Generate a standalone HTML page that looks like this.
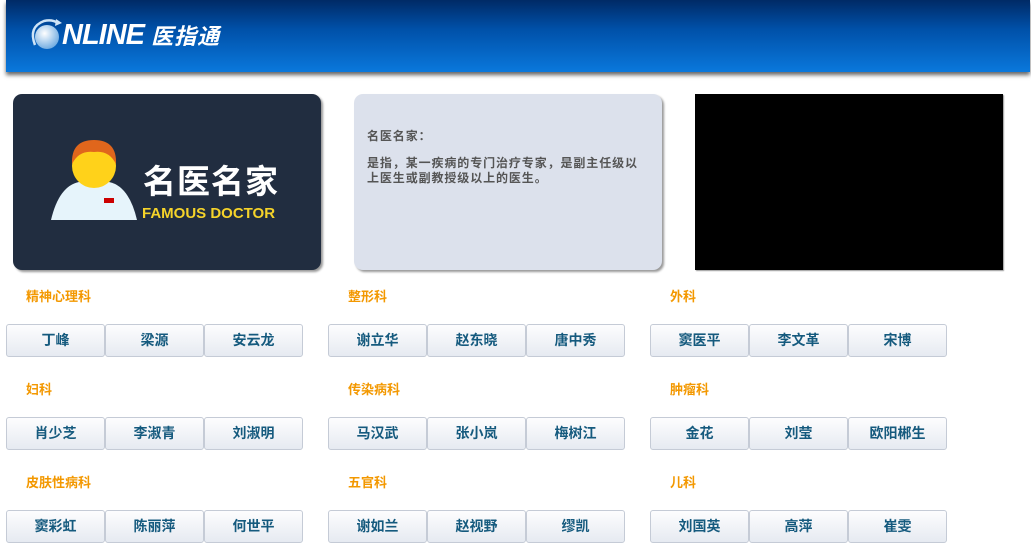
<!DOCTYPE html><html><head><meta charset="utf-8"><style>
body{margin:0;width:1031px;height:559px;background:#fff;position:relative;overflow:hidden;font-family:"Liberation Sans","Noto Sans CJK SC",sans-serif}
.hdr{position:absolute;left:6px;top:0;width:1024px;height:72px;background:linear-gradient(#002a66 0%,#0050a8 40%,#0a78dc 100%);box-shadow:0 3px 4px #666}
.logo{position:absolute;left:56px;top:19px;color:#fff;font-weight:bold;font-style:italic;font-size:29px;letter-spacing:-1px}
.logo span{font-size:22px;letter-spacing:1px}
.card{position:absolute;top:94px;width:308px;height:176px;border-radius:9px;box-shadow:2px 2px 2px #999}
.t{position:absolute;color:#f39800;font-weight:bold;font-size:13px}
.b{position:absolute;width:97px;height:31px;border:1px solid #c5cbd6;border-radius:3px;background:linear-gradient(#fdfdfe,#e6eaf1);color:#155a7e;font-weight:bold;font-size:14px;text-align:center;line-height:31px}
</style></head><body>
<div class="hdr">
<svg style="position:absolute;left:24px;top:17px" width="36" height="38"><defs><radialGradient id="g" cx="0.4" cy="0.35" r="0.7"><stop offset="0" stop-color="#fff"/><stop offset="1" stop-color="#6aa8e0"/></radialGradient></defs><circle cx="17" cy="20" r="12" fill="url(#g)"/><path d="M5 28 Q-2 10 14 4 Q22 2 28 6" stroke="#cfe4f7" stroke-width="2.5" fill="none"/><path d="M26 2 L32 6 L25 9Z" fill="#cfe4f7"/></svg>
<div class="logo">NLINE <span>医指通</span></div></div>
<div class="card" style="left:13px;background:#212d40">
<svg style="position:absolute;left:36px;top:40px" width="90" height="90"><path d="M2 86 Q10 52 30 48 L60 48 Q80 52 88 86 Z" fill="#e6f4fb"/><circle cx="45" cy="32" r="22" fill="#ffd21a"/><path d="M23 30 Q22 6 45 6 Q68 6 67 30 Q60 16 45 18 Q30 16 23 30Z" fill="#e0661c"/><rect x="55" y="64" width="10" height="5" fill="#c00"/></svg>
<div style="position:absolute;left:130px;top:68px;color:#fff;font-weight:bold;font-size:33px;letter-spacing:1px;line-height:40px">名医名家</div>
<div style="position:absolute;left:129px;top:111px;color:#f5d32a;font-weight:bold;font-size:15px;line-height:18px">FAMOUS DOCTOR</div>
</div>
<div class="card" style="left:354px;background:#dce1ec;color:#555;font-size:12px;font-weight:bold">
<div style="position:absolute;left:13px;top:33px;letter-spacing:0.9px">名医名家：</div>
<div style="position:absolute;left:13px;top:62px;width:282px;line-height:15px;letter-spacing:0.9px">是指，某一疾病的专门治疗专家，是副主任级以上医生或副教授级以上的医生。</div>
</div>
<div style="position:absolute;left:695px;top:94px;width:308px;height:176px;background:#000;box-shadow:1px 1px 1px #999"></div>

<div class="t" style="left:26px;top:286px">精神心理科</div>
<div class="t" style="left:348px;top:286px">整形科</div>
<div class="t" style="left:670px;top:286px">外科</div>
<div class="t" style="left:26px;top:379px">妇科</div>
<div class="t" style="left:348px;top:379px">传染病科</div>
<div class="t" style="left:670px;top:379px">肿瘤科</div>
<div class="t" style="left:26px;top:472px">皮肤性病科</div>
<div class="t" style="left:348px;top:472px">五官科</div>
<div class="t" style="left:670px;top:472px">儿科</div>

<div class="b" style="left:6px;top:324px">丁峰</div><div class="b" style="left:105px;top:324px">梁源</div><div class="b" style="left:204px;top:324px">安云龙</div>
<div class="b" style="left:328px;top:324px">谢立华</div><div class="b" style="left:427px;top:324px">赵东晓</div><div class="b" style="left:526px;top:324px">唐中秀</div>
<div class="b" style="left:650px;top:324px">窦医平</div><div class="b" style="left:749px;top:324px">李文革</div><div class="b" style="left:848px;top:324px">宋博</div>
<div class="b" style="left:6px;top:417px">肖少芝</div><div class="b" style="left:105px;top:417px">李淑青</div><div class="b" style="left:204px;top:417px">刘淑明</div>
<div class="b" style="left:328px;top:417px">马汉武</div><div class="b" style="left:427px;top:417px">张小岚</div><div class="b" style="left:526px;top:417px">梅树江</div>
<div class="b" style="left:650px;top:417px">金花</div><div class="b" style="left:749px;top:417px">刘莹</div><div class="b" style="left:848px;top:417px">欧阳郴生</div>
<div class="b" style="left:6px;top:510px">窦彩虹</div><div class="b" style="left:105px;top:510px">陈丽萍</div><div class="b" style="left:204px;top:510px">何世平</div>
<div class="b" style="left:328px;top:510px">谢如兰</div><div class="b" style="left:427px;top:510px">赵视野</div><div class="b" style="left:526px;top:510px">缪凯</div>
<div class="b" style="left:650px;top:510px">刘国英</div><div class="b" style="left:749px;top:510px">高萍</div><div class="b" style="left:848px;top:510px">崔雯</div>
</body></html>
